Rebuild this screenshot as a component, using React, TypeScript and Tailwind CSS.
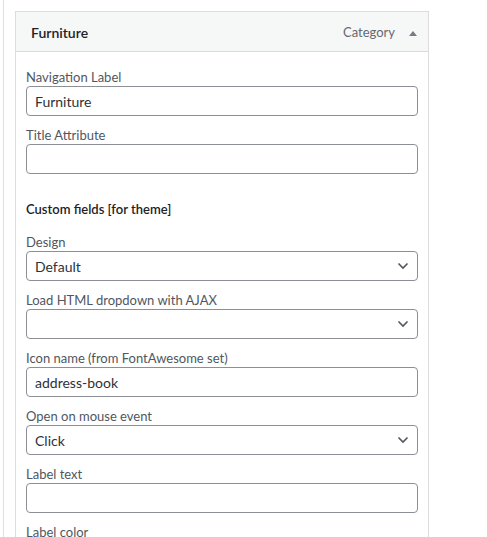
const FONT = "font-['Lato','Liberation_Sans',sans-serif]"

function Chevron() {
  return (
    <svg width="12" height="8" viewBox="0 0 12 8" fill="none" className="shrink-0">
      <path d="M1.5 1.5 L6 6 L10.5 1.5" stroke="#50575e" strokeWidth="1.6" />
    </svg>
  )
}

function Field({ label, value, select }: { label: string; value?: string; select?: boolean }) {
  return (
    <div className="mb-[10px]">
      <div className="h-[18px] text-[13px] leading-[18px] text-[#50575e]">{label}</div>
      <div className="flex h-[30px] items-center justify-between rounded-[4px] border border-[#8c8f94] bg-white pl-[8px] pr-[8px] text-[14px] text-[#2c3338]">
        <span>{value}</span>
        {select && <Chevron />}
      </div>
    </div>
  )
}

export default function App() {
  return (
    <div className={`${FONT} min-h-screen bg-white`}>
      <div className="ml-[3px] min-h-screen border-l border-[#e0e0e0] pl-[11px] pt-[11px]">
        <div className="w-[414px] border border-[#dcdcde]">
          <div className="flex h-[40px] items-center justify-between border-b border-[#dcdcde] bg-[#f6f7f7] pl-[15px] pr-[10px] pt-[2px]">
            <span className="text-[14px] font-semibold text-[#1d2327]">Furniture</span>
            <div className="flex items-center gap-[13px]">
              <span className="text-[13px] text-[#646970]">Category</span>
              <svg width="10" height="6" viewBox="0 0 10 6">
                <path d="M1 6 L5 1 L9 6 Z" fill="#787c82" />
              </svg>
            </div>
          </div>
          <div className="px-[10px] pt-[16px] pb-[10px]">
            <Field label="Navigation Label" value="Furniture" />
            <Field label="Title Attribute" />
            <div className="mt-[26px] mb-[15px] h-[18px] text-[13px] font-semibold leading-[18px] text-[#1d2327]">
              Custom fields [for theme]
            </div>
            <Field label="Design" value="Default" select />
            <Field label="Load HTML dropdown with AJAX" select />
            <Field label="Icon name (from FontAwesome set)" value="address-book" />
            <Field label="Open on mouse event" value="Click" select />
            <Field label="Label text" />
            <Field label="Label color" />
          </div>
        </div>
      </div>
    </div>
  )
}
